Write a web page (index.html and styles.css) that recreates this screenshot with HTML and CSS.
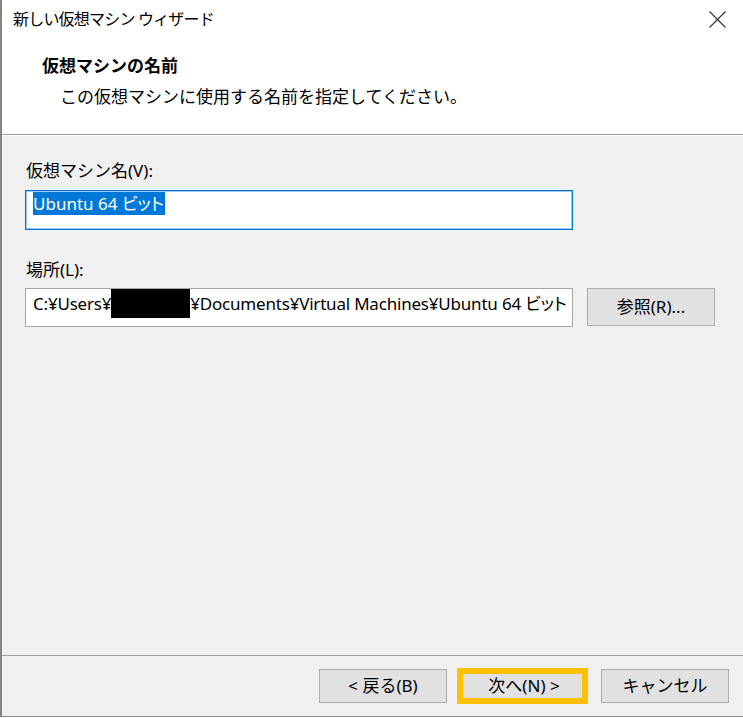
FILE: index.html
```html
<!DOCTYPE html>
<html lang="ja">
<head>
<meta charset="utf-8">
<title>新しい仮想マシン ウィザード</title>
<link rel="stylesheet" href="styles.css">
</head>
<body>
<div class="window">
  <div class="header">
    <div class="titlebar">
      <span class="title">新しい仮想マシン ウィザード</span>
      <svg class="close" width="17" height="17" viewBox="0 0 17 17"><path d="M0.5 0.5 L16.5 16.5 M16.5 0.5 L0.5 16.5" stroke="#333" stroke-width="1.1" fill="none"/></svg>
    </div>
    <div class="heading">仮想マシンの名前</div>
    <div class="subtitle">この仮想マシンに使用する名前を指定してください。</div>
  </div>
  <div class="content">
    <div class="label label-name">仮想マシン名(V):</div>
    <div class="field field-name"><span class="selected">Ubuntu 64 ビット</span></div>
    <div class="label label-loc">場所(L):</div>
    <div class="row">
      <div class="field field-loc">C:¥Users¥<span class="redact"></span>¥Documents¥Virtual Machines¥Ubuntu 64 ビット</div>
      <div class="btn browse">参照(R)...</div>
    </div>
  </div>
  <div class="footer">
    <div class="btn">&lt; 戻る(B)</div>
    <div class="btn next">次へ(N) &gt;</div>
    <div class="btn">キャンセル</div>
  </div>
</div>
</body>
</html>
```
FILE: styles.css
```css
html, body {
  margin: 0;
  padding: 0;
  background: #ffffff;
}
body {
  width: 743px;
  height: 718px;
  overflow: hidden;
  font-family: "Noto Sans", "Noto Sans CJK JP", sans-serif;
  color: #000;
}
.window {
  box-sizing: border-box;
  width: 743px;
  height: 717px;
  border-left: 2px solid #858585;
  border-bottom: 1px solid #8a8a8a;
  display: flex;
  flex-direction: column;
}
.header {
  height: 134px;
  flex: none;
  background: #fff;
  border-bottom: 1px solid #a0a0a0;
}
.titlebar {
  height: 38px;
  display: flex;
  align-items: center;
  justify-content: space-between;
  padding: 0 17px 0 11px;
}
.title {
  font-size: 16px;
  line-height: 20px;
  letter-spacing: -0.8px;
}
.close {
  display: block;
}
.heading {
  margin: 16px 0 0 40px;
  font-size: 17px;
  line-height: 24px;
  font-weight: 700;
}
.subtitle {
  margin: 7px 0 0 58px;
  font-size: 17px;
  line-height: 24px;
}
.content {
  flex: 1;
  background: #f0f0f0;
  border-top: 1px solid #ffffff;
  padding: 24px 0 0 23px;
}
.label {
  font-size: 17px;
  line-height: 22px;
  padding-left: 1px;
}
.label-loc {
  margin-top: 29px;
}
.field {
  box-sizing: border-box;
  width: 548px;
  background: #fff;
  font-size: 17px;
  white-space: nowrap;
  overflow: hidden;
  font-feature-settings: "palt";
}
.field-name {
  margin-top: 8px;
  height: 40px;
  border: 1px solid #0078d7;
  box-shadow: inset 0 0 0 1px #9cc8ef;
  padding: 1px 0 0 7px;
  line-height: 23px;
}
.selected {
  display: inline-block;
  background: #0078d7;
  color: #fff;
  line-height: 23px;
  padding-right: 1px;
}
.row {
  margin-top: 7px;
  display: flex;
  align-items: flex-start;
  gap: 14px;
}
.field-loc {
  height: 39px;
  border: 1px solid #a5a5a5;
  padding: 0 0 0 7px;
  line-height: 29px;
  letter-spacing: -0.2px;
}
.redact {
  display: inline-block;
  width: 79px;
  height: 29px;
  background: #000;
  vertical-align: top;
}
.btn {
  box-sizing: border-box;
  width: 128px;
  height: 34px;
  background: #e1e1e1;
  border: 1px solid #adadad;
  font-size: 17px;
  line-height: 32px;
  text-align: center;
  position: relative;
}
.browse {
  height: 38px;
  line-height: 36px;
}
.footer {
  flex: none;
  height: 61px;
  box-sizing: border-box;
  background: #f0f0f0;
  border-top: 1px solid #a0a0a0;
  display: flex;
  gap: 13px;
  padding: 13px 0 0 317px;
}
.next::after {
  content: "";
  position: absolute;
  top: -2px;
  bottom: -2px;
  left: -4px;
  right: -1px;
  border: 6px solid #ffc000;
}
```
